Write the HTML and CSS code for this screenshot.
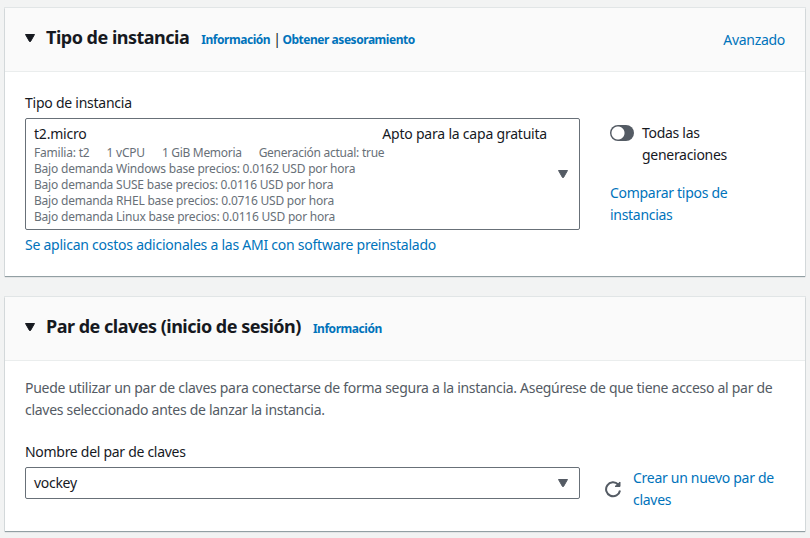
FILE: index.html
```html
<!DOCTYPE html>
<html lang="es">
<head>
<meta charset="utf-8">
<title>Lanzar una instancia</title>
<link rel="stylesheet" href="styles.css">
</head>
<body>
<section class="card">
  <header class="head">
    <svg class="caret" width="10" height="8" viewBox="0 0 10 8"><path d="M.5.500h9L5.500 7.500h-1z"/></svg>
    <h2>Tipo de instancia</h2>
    <div class="info"><a>Información</a><span class="bar">|</span><a>Obtener asesoramiento</a></div>
    <a class="adv">Avanzado</a>
  </header>
  <div class="body type">
    <div class="main">
      <div class="label kind">Tipo de instancia</div>
      <div class="select big">
        <div class="opt">
          <div class="top"><span>t2.micro</span><span class="free">Apto para la capa gratuita</span></div>
          <div class="meta"><span>Familia: t2</span><span>1 vCPU</span><span class="memory">1 GiB Memoria</span><span class="generation">Generación actual: true</span></div>
          <div>Bajo demanda Windows base precios: 0.0162 USD por hora</div>
          <div>Bajo demanda SUSE base precios: 0.0116 USD por hora</div>
          <div>Bajo demanda RHEL base precios: 0.0716 USD por hora</div>
          <div>Bajo demanda Linux base precios: 0.0116 USD por hora</div>
        </div>
        <svg class="down" width="10" height="8" viewBox="0 0 10 8"><path d="M.5.500h9L5.500 7.500h-1z"/></svg>
      </div>
      <a class="note">Se aplican costos adicionales a las AMI con software preinstalado</a>
    </div>
    <aside class="side">
      <div class="toggle"><span class="switch"></span><span>Todas las<br>generaciones</span></div>
      <a>Comparar tipos de<br>instancias</a>
    </aside>
  </div>
</section>
<section class="card second">
  <header class="head">
    <svg class="caret" width="10" height="8" viewBox="0 0 10 8"><path d="M.5.500h9L5.500 7.500h-1z"/></svg>
    <h2>Par de claves (inicio de sesión)</h2>
    <div class="info"><a>Información</a></div>
  </header>
  <div class="body">
    <p class="desc">Puede utilizar un par de claves para conectarse de forma segura a la instancia. Asegúrese de que tiene acceso al par de<br>claves seleccionado antes de lanzar la instancia.</p>
    <div class="label">Nombre del par de claves</div>
    <div class="row">
      <div class="select"><span>vockey</span><svg class="down" width="10" height="8" viewBox="0 0 10 8"><path d="M.5.500h9L5.500 7.500h-1z"/></svg></div>
      <svg class="refresh" width="18" height="18" viewBox="0 0 18 18"><path d="M16 10.500A7 7 0 1 1 14.200 4.500"/><path class="tip" d="M16 2v4.500h-5z"/></svg>
      <a class="create">Crear un nuevo par de<br>claves</a>
    </div>
  </div>
</section>
</body>
</html>
```

FILE: styles.css
```css
* { box-sizing: border-box; }
body {
  margin: 0;
  padding: 8px 5px 0;
  height: 538px;
  overflow: hidden;
  background: #f2f3f3;
  color: #16191f;
  font: 14px/22px "Noto Sans", sans-serif;
  letter-spacing: -.29px;
}
a { color: #0073bb; }
.card {
  height: 268px;
  background: #fff;
  box-shadow: 0 1px 1px rgba(0, 28, 36, .35), 0 0 0 1px #e1e5e6;
}
.second { height: 234px; margin-top: 21px; }
.head {
  display: flex;
  height: 64px;
  padding: 0 20px;
  align-items: center;
  background: #fafafa;
  border-bottom: 1px solid #eaeded;
}
svg { flex: none; fill: #16191f; stroke: #16191f; stroke-linejoin: round; }
.caret { margin: 0 11px 3px 0; }
h2 {
  margin: 0 12px 5px 0;
  font-size: 18px;
  line-height: 22px;
  letter-spacing: -.5px;
  white-space: nowrap;
}
.info { display: flex; font-size: 12px; font-weight: 700; letter-spacing: -.46px; white-space: nowrap; }
.bar { margin: -1px 2px 1px 3px; font-size: 14px; font-weight: 400; }
.adv { margin-left: auto; }
.body { padding: 20px; white-space: nowrap; }
.type { display: flex; gap: 30px; }
.main { width: 555px; }
.label { margin-bottom: 4px; }
.kind, .note { letter-spacing: -.245px; }
.select {
  display: flex;
  width: 555px;
  height: 32px;
  padding: 0 11px 0 8px;
  align-items: center;
  justify-content: space-between;
  border: 1px solid #687078;
  border-radius: 2px;
}
.down { fill: #545b64; stroke: #545b64; }
.big { height: 112px; margin-bottom: 4px; }
.opt { width: 513px; font-size: 12px; line-height: 16px; letter-spacing: -.21px; color: #687078; }
.top { display: flex; justify-content: space-between; font-size: 14px; line-height: 22px; color: #16191f; }
.meta { display: flex; gap: 17px; }
.memory { letter-spacing: -.3px; }
.generation { letter-spacing: -.26px; }
.side { padding-top: 30px; }
.toggle { display: flex; gap: 8px; margin-bottom: 16px; }
.switch {
  width: 24px;
  height: 16px;
  margin-top: 3px;
  border-radius: 8px;
  background: radial-gradient(circle at 8px 8px, #fff 6px, #545b64 7px);
}
.desc { margin: -4px 0 20px; color: #545b64; }
.row { display: flex; }
.refresh { margin: 13px 11px 0 24px; fill: none; stroke: #545b64; stroke-width: 2; stroke-linejoin: miter; }
.tip { fill: #545b64; stroke-width: 1; }
```
